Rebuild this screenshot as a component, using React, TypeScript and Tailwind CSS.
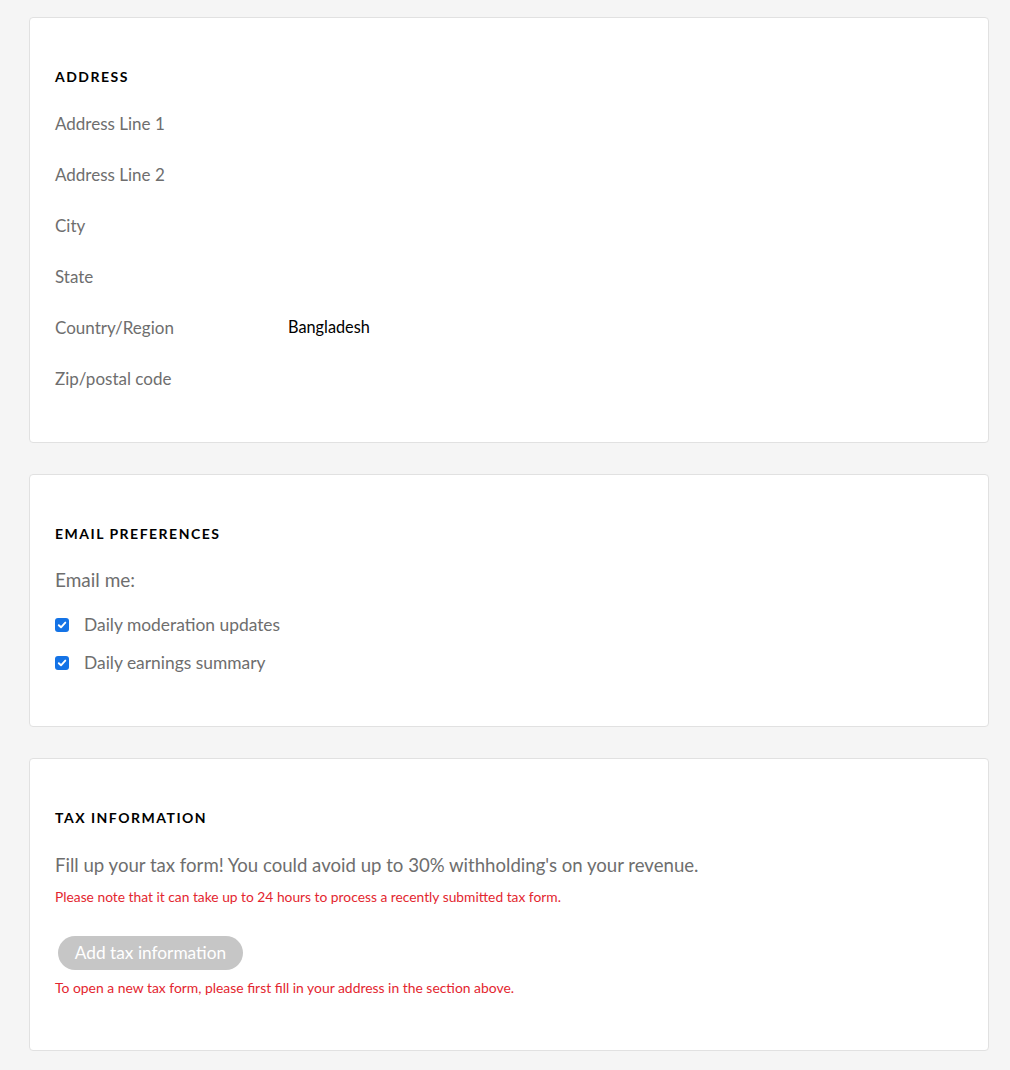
import React from 'react';

const font = { fontFamily: 'Lato, "Open Sans", sans-serif' };

const Card: React.FC<{ title: string; className?: string; children: React.ReactNode }> = ({ title, className, children }) => (
  <section className={`bg-white border border-[#e1e1e1] rounded-[4px] px-[25px] pt-[49px] ${className ?? ''}`}>
    <h2 className="h-5 leading-5 text-[14px] font-bold tracking-[1.5px] text-black">{title}</h2>
    {children}
  </section>
);

const CheckRow: React.FC<{ label: string }> = ({ label }) => (
  <label className="h-[38px] flex items-center">
    <span className="w-[14px] h-[14px] rounded-[3px] bg-[#1473e6] flex items-center justify-center">
      <svg width="10" height="10" viewBox="0 0 10 10" fill="none">
        <path d="M1.8 5.2 L4 7.3 L8.3 2.6" stroke="white" strokeWidth="1.9" strokeLinecap="round" strokeLinejoin="round" />
      </svg>
    </span>
    <span className="ml-[15px] text-[17.4px] text-[#6e6e6e]">{label}</span>
  </label>
);

export default function App() {
  const fields = [
    { label: 'Address Line 1', value: '' },
    { label: 'Address Line 2', value: '' },
    { label: 'City', value: '' },
    { label: 'State', value: '' },
    { label: 'Country/Region', value: 'Bangladesh' },
    { label: 'Zip/postal code', value: '' },
  ];

  return (
    <div className="min-h-screen bg-[#f5f5f5] pt-[17px] pl-[29px] pr-[21px] pb-5" style={font}>
      <div className="flex flex-col gap-[31px]">
        <Card title="ADDRESS" className="pb-[38px]">
          <div className="mt-[11px]">
            {fields.map((f) => (
              <div key={f.label} className="h-[51px] flex items-center">
                <span className="w-[233px] text-[17px] text-[#6e6e6e]">{f.label}</span>
                <span className="text-[16.3px] text-black">{f.value}</span>
              </div>
            ))}
          </div>
        </Card>

        <Card title="EMAIL PREFERENCES" className="pb-[44px]">
          <p className="mt-6 text-[19px] leading-6 text-[#6e6e6e]">Email me:</p>
          <div className="mt-[14px]">
            <CheckRow label="Daily moderation updates" />
            <CheckRow label="Daily earnings summary" />
          </div>
        </Card>

        <Card title="TAX INFORMATION" className="pb-[53px]">
          <p className="mt-[25px] text-[18.6px] leading-6 text-[#6e6e6e]">
            Fill up your tax form! You could avoid up to 30% withholding's on your revenue.
          </p>
          <p className="mt-[11px] text-[13.8px] leading-[18px] text-[#e3262f]">
            Please note that it can take up to 24 hours to process a recently submitted tax form.
          </p>
          <button
            disabled
            className="mt-[30px] ml-[3px] h-[34px] w-[185px] rounded-full bg-[#c6c6c6] text-white text-[17.3px] flex items-center justify-center"
          >
            Add tax information
          </button>
          <p className="mt-[9px] text-[13.9px] leading-[18px] text-[#e3262f]">
            To open a new tax form, please first fill in your address in the section above.
          </p>
        </Card>
      </div>
    </div>
  );
}
